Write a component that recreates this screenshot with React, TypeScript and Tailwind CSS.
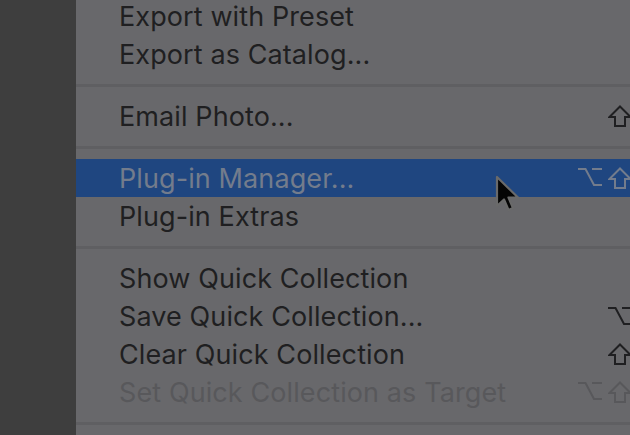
import React from 'react';

type Item =
  | { kind: 'item'; label: string; mods?: ('opt' | 'shift')[]; active?: boolean; disabled?: boolean }
  | { kind: 'sep' };

const items: Item[] = [
  { kind: 'item', label: 'Export with Preset' },
  { kind: 'item', label: 'Export as Catalog...' },
  { kind: 'sep' },
  { kind: 'item', label: 'Email Photo...', mods: ['shift'] },
  { kind: 'sep' },
  { kind: 'item', label: 'Plug-in Manager...', mods: ['opt', 'shift'], active: true },
  { kind: 'item', label: 'Plug-in Extras' },
  { kind: 'sep' },
  { kind: 'item', label: 'Show Quick Collection' },
  { kind: 'item', label: 'Save Quick Collection...', mods: ['opt'] },
  { kind: 'item', label: 'Clear Quick Collection', mods: ['shift'] },
  { kind: 'item', label: 'Set Quick Collection as Target', mods: ['opt', 'shift'], disabled: true },
  { kind: 'sep' },
];

const OptionKey = () => (
  <svg width="24" height="20" viewBox="0 0 24 20" fill="none" stroke="currentColor" strokeWidth="2">
    <path d="M0 2 H7.5 L16 18 H24" />
    <path d="M14 2 H24" />
  </svg>
);

const ShiftKey = () => (
  <svg width="24" height="22" viewBox="0 0 24 22" fill="none" stroke="currentColor" strokeWidth="2" strokeLinejoin="miter">
    <path d="M12 1.5 L22.5 12 H17 V21 H7 V12 H1.5 Z" />
  </svg>
);

const Cursor = () => (
  <svg width="26" height="38" viewBox="0 0 26 38" className="absolute left-[495px] top-[175px]">
    <path
      d="M2 2 L2 31 L9 24.5 L13.5 35 L18 33 L13.5 22.5 L23 22.5 Z"
      fill="#050505"
      stroke="#6a6a6a"
      strokeWidth="2.2"
      strokeLinejoin="round"
    />
  </svg>
);

export default function App() {
  return (
    <div
      className="relative w-[630px] h-[435px] overflow-hidden flex bg-[#3e3e3e]"
      style={{ fontFamily: 'Inter, "Liberation Sans", sans-serif' }}
    >
      <div className="w-[76px] shrink-0 bg-[#3e3e3e]" />
      <div className="w-[720px] shrink-0 bg-[#68686b] flex flex-col -mt-[3px]">
        {items.map((it, i) =>
          it.kind === 'sep' ? (
            <div key={i} className="h-[24px] flex items-center">
              <div className="w-full h-[3px] bg-[#5f5f62]" />
            </div>
          ) : (
            <div
              key={i}
              className={
                'h-[38px] shrink-0 flex items-center pl-[43px] ' +
                (it.active ? 'bg-[#1f4680] text-[#737c8c]' : it.disabled ? 'text-[#58585b]' : 'text-[#1f1f21]')
              }
            >
              <span className="flex-1 text-[27px] leading-none tracking-[0.1px]">{it.label}</span>
              <span className="w-[180px] flex justify-end">
                {(it.mods ?? []).map((m, j) => (
                  <span key={j} className="w-[30px] flex justify-center">
                    {m === 'opt' ? <OptionKey /> : <ShiftKey />}
                  </span>
                ))}
                <span className="w-[60px]" />
              </span>
              <span className="w-[101px]" />
            </div>
          )
        )}
      </div>
      <Cursor />
    </div>
  );
}
